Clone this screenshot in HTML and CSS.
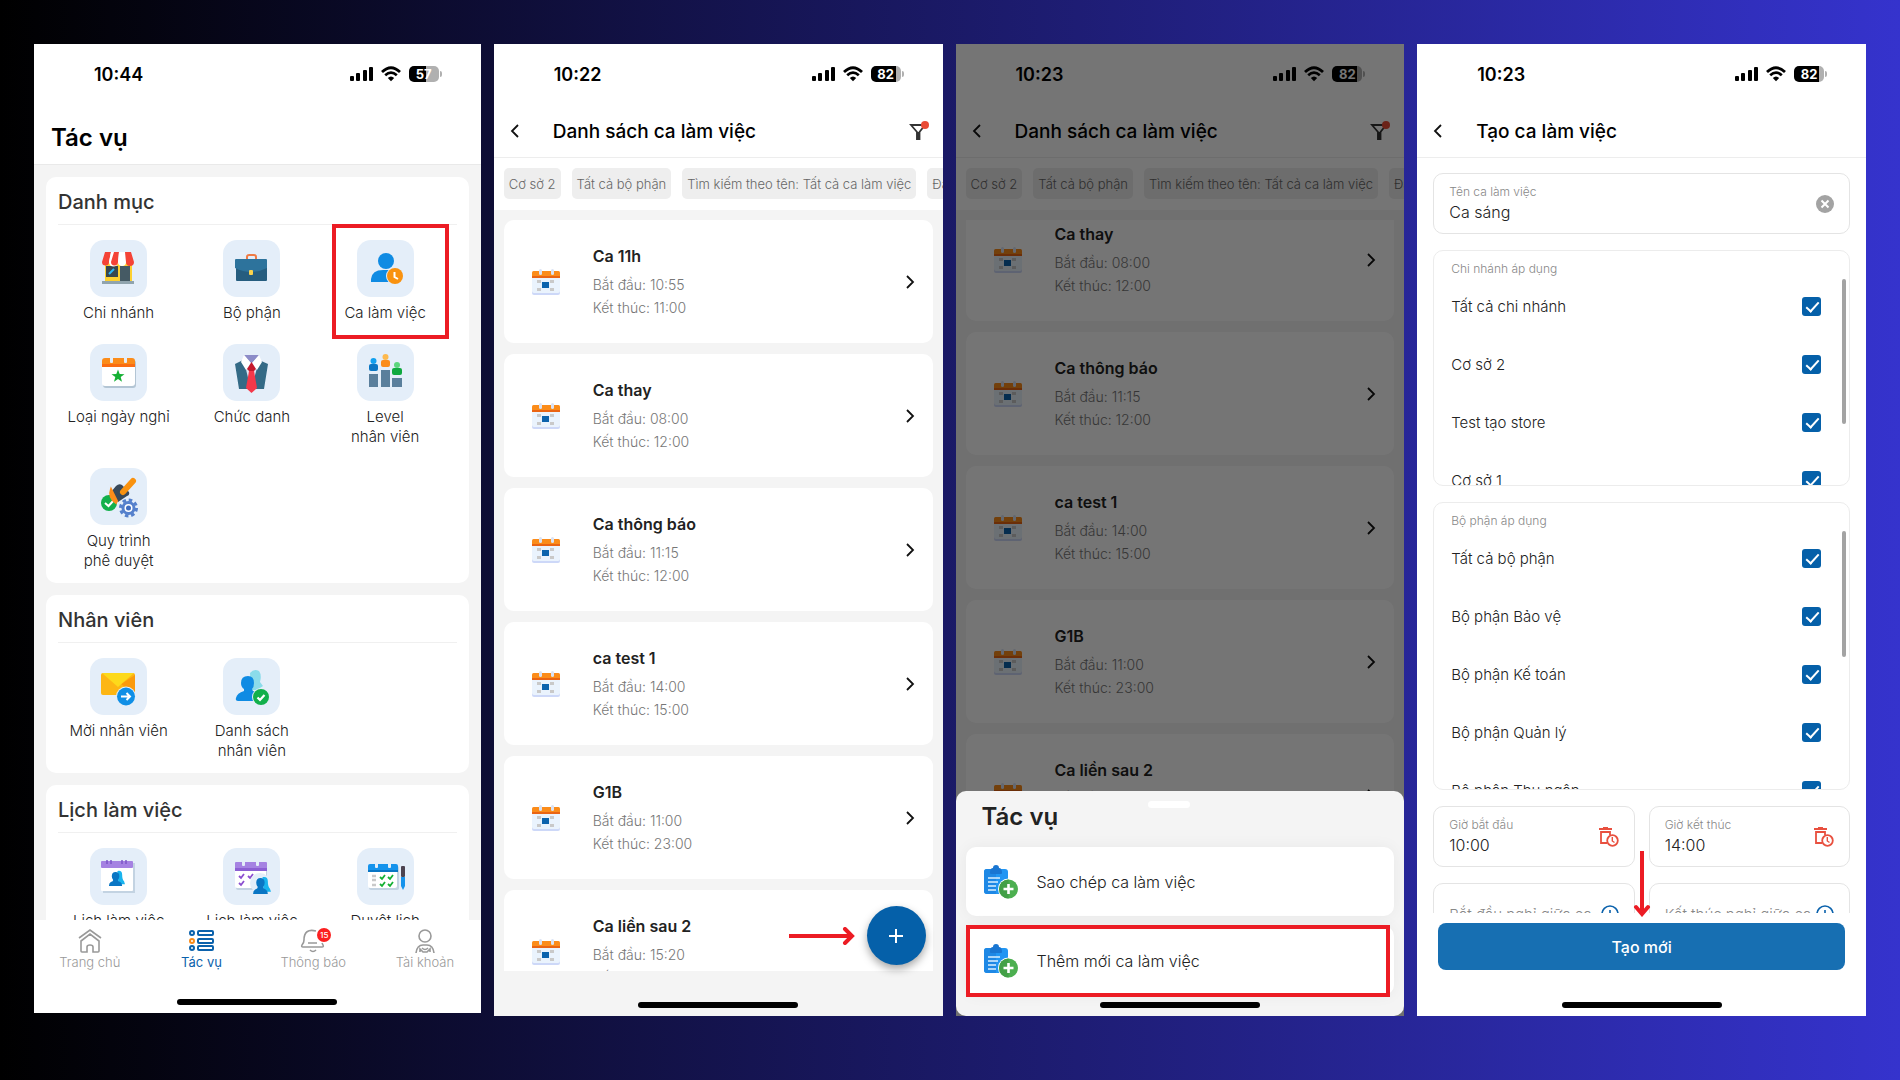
FILE: index.html
```html
<!DOCTYPE html>
<html lang="vi">
<head>
    <meta charset="UTF-8">
    <meta name="viewport" content="width=device-width, initial-scale=1.0">
    <title>Tạo ca làm việc</title>
    <link rel="stylesheet" href="styles.css">
</head>
<body>
    <!-- Biểu tượng dùng chung -->
    <svg class="sprite" width="0" height="0" aria-hidden="true">
        <symbol id="signal" viewBox="0 0 24 16">
            <rect x="0" y="10" width="4" height="5" rx="1"/>
            <rect x="6" y="7" width="4" height="8" rx="1"/>
            <rect x="13" y="4" width="4" height="11" rx="1"/>
            <rect x="19" y="1" width="4" height="14" rx="1"/>
        </symbol>
        <symbol id="wifi" viewBox="0 0 20 16">
            <path d="M1 6 Q10 -2.500 19 6" fill="none" stroke="#000" stroke-width="2.800"/>
            <path d="M4.200 9.200 Q10 4 15.800 9.200" fill="none" stroke="#000" stroke-width="2.700"/>
            <path d="M6.800 12 Q10 9 13.200 12 L10 15.200 Z"/>
        </symbol>
        <symbol id="back" viewBox="0 0 10 14">
            <path d="M8 1 L2 7 L8 13" fill="none" stroke="#111" stroke-width="1.800"/>
        </symbol>
        <symbol id="next" viewBox="0 0 10 14">
            <path d="M2 1 L8 7 L2 13" fill="none" stroke="#111" stroke-width="1.800"/>
        </symbol>
        <symbol id="filter" viewBox="0 0 22 22">
            <path d="M2 5 H16 L10.500 12 V19 H8 V12 Z" fill="none" stroke="#333" stroke-width="1.800"/>
            <path d="M7.500 12 H11 V20 H7.500 Z" fill="#333"/>
            <circle cx="16" cy="5" r="4" fill="#e94b35"/>
        </symbol>
        <symbol id="calendar" viewBox="0 0 28 26">
            <rect x="0" y="3" width="28" height="23" rx="2" fill="#cdd8f8"/>
            <rect x="0" y="3" width="28" height="21" rx="2" fill="#eaf3fd"/>
            <path d="M0 9 V3.500 Q0 2 1.500 2 H26.500 Q28 2 28 3.500 V9 Z" fill="#fb8c1a"/>
            <path d="M0 7 H28 V9 H0 Z" fill="#ea6413"/>
            <rect x="7" y="0" width="3" height="6" rx="1.500" fill="#d9e2f3"/>
            <rect x="19" y="0" width="3" height="6" rx="1.500" fill="#d9e2f3"/>
            <rect x="5" y="11" width="4" height="3" fill="#c9c9c9"/>
            <rect x="18" y="11" width="4" height="3" fill="#c9c9c9"/>
            <rect x="5" y="19" width="4" height="3" fill="#c9c9c9"/>
            <rect x="18" y="19" width="4" height="3" fill="#c9c9c9"/>
            <rect x="10" y="13" width="7" height="6" fill="#0c63ad"/>
        </symbol>
        <symbol id="clipboard" viewBox="0 0 34 34">
            <rect x="0" y="4" width="24" height="25" rx="3" fill="#2196f3"/>
            <path d="M0 7 Q0 4 3 4 H12 V29 H3 Q0 29 0 26 Z" fill="#1e88e5"/>
            <path d="M6 8 Q6 3 9 3 Q9 0 12 0 Q15 0 15 3 Q18 3 18 8 Q18 9 17 9 H7 Q6 9 6 8 Z" fill="#1976d2"/>
            <path d="M4 13 H16 M4 17 H14 M4 21 H12 M4 25 H12" stroke="#d9efff" stroke-width="1.600"/>
            <circle cx="24.500" cy="24" r="10.500" fill="#fff"/>
            <circle cx="24.500" cy="24" r="9.500" fill="#4caf50"/>
            <path d="M24.500 14.500 A9.500 9.500 0 0 0 24.500 33.500 Z" fill="#43a047"/>
            <path d="M24.500 19 V29 M19.500 24 H29.500" stroke="#fff" stroke-width="2.600"/>
        </symbol>
        <symbol id="trash-clock" viewBox="0 0 20 20">
            <path d="M0 2 H13 M4 1 H9" fill="none" stroke="#e8503f" stroke-width="1.800"/>
            <path d="M8 16 H2 V5 H11 V8" fill="none" stroke="#e8503f" stroke-width="1.800"/>
            <circle cx="13.500" cy="13.500" r="5.300" fill="#fff" stroke="#e8503f" stroke-width="1.800"/>
            <path d="M13.300 10 V14 L15.500 15.500" fill="none" stroke="#e8503f" stroke-width="1.400"/>
        </symbol>
        <symbol id="info" viewBox="0 0 18 18">
            <circle cx="9" cy="9" r="8" fill="none" stroke="#0b62ac" stroke-width="1.600"/>
            <path d="M9 5 V9 L12 11" fill="none" stroke="#0b62ac" stroke-width="1.600"/>
        </symbol>
        <symbol id="people" viewBox="0 0 18 18">
            <path d="M10 1 Q15 0 15 5 Q15 10 17 12 L18 15 H11 Z" fill="#19b4ee"/>
            <path d="M8 2 Q12 2 12 6.500 Q12 9 10.500 10.500 Q10.500 12 13 12.800 Q15 14 15 17 H1 Q1 14 3 12.800 Q5.500 12 5.500 10.500 Q4 9 4 6.500 Q4 2 8 2 Z" fill="#0a76c4"/>
        </symbol>
    </svg>

    <main class="screens">

        <!-- Màn hình 1: Tác vụ -->
        <section class="phone phone-tasks">
            <div class="status">
                <span class="time">10:44</span>
                <svg class="signal"><use href="#signal"/></svg>
                <svg class="wifi"><use href="#wifi"/></svg>
                <span class="battery battery-half">57</span>
            </div>
            <header class="big-header"><h1>Tác vụ</h1></header>
            <div class="groups">
                <div class="group">
                    <h2>Danh mục</h2>
                    <div class="tiles">
                        <a class="tile" href="#">
                            <svg viewBox="0 0 57 57">
                                <rect x="15" y="22" width="27" height="20" fill="#fdd02f"/>
                                <rect x="16" y="26" width="12" height="11" fill="#37474f"/>
                                <path d="M19 34 L24 29" stroke="#29b6f6" stroke-width="2"/>
                                <rect x="30" y="26" width="10" height="16" fill="#455a64"/>
                                <rect x="12" y="41" width="32" height="3" fill="#90a4ae"/>
                                <path d="M15 12 H21 L19 22 A3.500 3.500 0 0 1 12 22 Z" fill="#f44336"/>
                                <path d="M21 12 H28 V22 A3.500 3.500 0 0 1 19 22 Z" fill="#fff"/>
                                <path d="M24 12 H29 L28 22 A3.500 3.500 0 0 1 21 22 Z" fill="#f44336"/>
                                <path d="M29 12 H35 L36 22 A3.500 3.500 0 0 1 28 22 Z" fill="#fff"/>
                                <path d="M35 12 H41 L44 22 A3.500 3.500 0 0 1 36 22 Z" fill="#f44336"/>
                            </svg>
                            <span>Chi nhánh</span>
                        </a>
                        <a class="tile" href="#">
                            <svg viewBox="0 0 57 57">
                                <path d="M24 19 V17 Q24 15 26 15 H31 Q33 15 33 17 V19" fill="none" stroke="#ef7b45" stroke-width="2"/>
                                <rect x="13" y="24" width="31" height="17" rx="1" fill="#265d7f"/>
                                <path d="M12 20 Q12 19 13 19 H43 Q44 19 44 20 V28 Q36 32 28 32 Q20 32 12 28 Z" fill="#2d739c"/>
                                <rect x="26" y="30" width="4" height="5" rx="1" fill="#fbd34c"/>
                            </svg>
                            <span>Bộ phận</span>
                        </a>
                        <a class="tile marked" href="#">
                            <svg viewBox="0 0 57 57">
                                <circle cx="29" cy="21" r="8" fill="#0f8be3"/>
                                <path d="M14 42 V39 Q15 30 26 30 H35 V42 Z" fill="#0f8be3"/>
                                <circle cx="38" cy="36" r="9" fill="#e4eef9"/>
                                <circle cx="38" cy="36" r="8" fill="#f9920f"/>
                                <path d="M37.500 32 V37 L41 39" fill="none" stroke="#fff" stroke-width="2"/>
                            </svg>
                            <span>Ca làm việc</span>
                        </a>
                        <a class="tile" href="#">
                            <svg viewBox="0 0 57 57">
                                <rect x="13" y="16" width="33" height="28" rx="3" fill="#b3c5d4"/>
                                <rect x="12" y="15" width="33" height="27" rx="3" fill="#fff"/>
                                <path d="M12 23 V17 Q12 14 15 14 H42 Q45 14 45 17 V23 Z" fill="#fb8c1a"/>
                                <path d="M12 20 H45 V23 H12 Z" fill="#fa6d12"/>
                                <rect x="20" y="12" width="3" height="7" rx="1" fill="#e4eef9"/>
                                <rect x="34" y="12" width="3" height="7" rx="1" fill="#e4eef9"/>
                                <path d="M28 25.500 L29.700 30 L34.500 30.200 L30.700 33.100 L32 37.800 L28 35.100 L24 37.800 L25.300 33.100 L21.500 30.200 L26.300 30 Z" fill="#15b034"/>
                            </svg>
                            <span>Loại ngày nghỉ</span>
                        </a>
                        <a class="tile" href="#">
                            <svg viewBox="0 0 57 57">
                                <path d="M12 20 L20 16 L28 34 L36 16 L45 20 L41 45 H16 Z" fill="#346a86"/>
                                <path d="M21 17 H36 L29 42 H27 Z" fill="#dfe6f4"/>
                                <path d="M21 11 H36 L28.500 20 Z" fill="#8c8cc8"/>
                                <path d="M21 11 L28 19 L23 26 L18 18 Z M36 11 L29 19 L34 26 L39 18 Z" fill="#fff"/>
                                <path d="M28.500 18 L33 25 L31 27 H26 L24 25 Z" fill="#c5192d"/>
                                <path d="M26 27 H31 L34 44 L28.500 49 L23 44 Z" fill="#f4384a"/>
                            </svg>
                            <span>Chức danh</span>
                        </a>
                        <a class="tile" href="#">
                            <svg viewBox="0 0 57 57">
                                <rect x="12" y="30" width="9" height="13" fill="#5a7f9c"/>
                                <rect x="24" y="26" width="9" height="17" fill="#5a7f9c"/>
                                <rect x="35" y="34" width="10" height="9" fill="#5a7f9c"/>
                                <rect x="12" y="20" width="9" height="7" rx="2" fill="#0a76c4"/>
                                <circle cx="16.500" cy="17" r="3" fill="#12a0ef"/>
                                <rect x="24" y="16" width="9" height="7" rx="2" fill="#fb8c1a"/>
                                <circle cx="28.500" cy="13" r="3" fill="#fdb94e"/>
                                <rect x="35" y="24" width="10" height="7" rx="2" fill="#0fa93f"/>
                                <circle cx="40" cy="21" r="3" fill="#5cd67d"/>
                            </svg>
                            <span>Level<br>nhân viên</span>
                        </a>
                        <a class="tile" href="#">
                            <svg viewBox="0 0 57 57">
                                <circle cx="19" cy="35" r="8" fill="#12b04b"/>
                                <path d="M15 35 L18.500 38 L24 32" fill="none" stroke="#fff" stroke-width="2"/>
                                <path d="M21 24 L26 18 Q29 15 32 17 L39 24 Q40 27 37 28 L28 34 Z" fill="#38495a"/>
                                <path d="M21 21 L27 33 L26 35 Q18 29 21 21 Z" fill="#fb8c1a" stroke="#fb8c1a" stroke-width="2"/>
                                <path d="M33 24 L43 13" stroke="#f9920f" stroke-width="6" stroke-linecap="round"/>
                                <circle cx="38.500" cy="40" r="8" fill="none" stroke="#5580cc" stroke-width="3" stroke-dasharray="3.500 2.780"/>
                                <circle cx="38.500" cy="40" r="5.500" fill="#fff" stroke="#5580cc" stroke-width="3"/>
                                <circle cx="38.500" cy="40" r="2.500" fill="#3f6cc0"/>
                            </svg>
                            <span>Quy trình<br>phê duyệt</span>
                        </a>
                    </div>
                </div>
                <div class="group">
                    <h2>Nhân viên</h2>
                    <div class="tiles">
                        <a class="tile" href="#">
                            <svg viewBox="0 0 57 57">
                                <rect x="11" y="15" width="34" height="22" rx="2" fill="#fdb614"/>
                                <path d="M45 17 V36 L31 26 Z" fill="#fb9a0c"/>
                                <path d="M12 15 H44 L28 29 Z" fill="#fdd91b"/>
                                <circle cx="36" cy="38.500" r="10" fill="#e4eef9"/>
                                <circle cx="36" cy="38.500" r="9" fill="#108fe6"/>
                                <path d="M31 38.500 H40 M36.500 35 L40 38.500 L36.500 42" fill="none" stroke="#fff" stroke-width="2"/>
                            </svg>
                            <span>Mời nhân viên</span>
                        </a>
                        <a class="tile" href="#">
                            <svg viewBox="0 0 57 57">
                                <path d="M27 15 Q31 10 36 13 Q39 17 37 24 L40 28 L34 32 H28 Z" fill="#8bdcea"/>
                                <path d="M25 18 Q31 18 31 25 Q31 29 29 31 Q29 33 32 34 L36 43 H15 Q12 43 13 40 Q14 35 21 33 Q21 32 21 31 Q18 29 18 25 Q18 18 25 18 Z" fill="#0f8be3"/>
                                <circle cx="38" cy="39" r="9" fill="#e4eef9"/>
                                <circle cx="38" cy="39" r="8" fill="#12b04b"/>
                                <path d="M34.500 39.500 L37 42 L41.500 37" fill="none" stroke="#fff" stroke-width="2.200"/>
                            </svg>
                            <span>Danh sách<br>nhân viên</span>
                        </a>
                    </div>
                </div>
                <div class="group">
                    <h2>Lịch làm việc</h2>
                    <div class="tiles">
                        <a class="tile" href="#">
                            <svg viewBox="0 0 57 57">
                                <rect x="13" y="15" width="32" height="30" fill="#c3d3e2"/>
                                <rect x="11" y="14" width="32" height="29" rx="1" fill="#fff"/>
                                <rect x="11" y="13" width="32" height="7" rx="1" fill="#a582e2"/>
                                <path d="M17 16 V12 M21 16 V12 M32 16 V12 M36 16 V12" stroke="#7d55c7" stroke-width="1.500"/>
                                <use href="#people" x="18" y="22" width="17" height="17"/>
                            </svg>
                            <span>Lịch làm việc</span>
                        </a>
                        <a class="tile" href="#">
                            <svg viewBox="0 0 57 57">
                                <rect x="13" y="16" width="31" height="26" rx="2" fill="#c3d3e2"/>
                                <rect x="12" y="15" width="31" height="25" rx="2" fill="#fff"/>
                                <path d="M12 22 V15 Q12 14 13 14 H43 Q44 14 44 15 V22 Z" fill="#a582e2"/>
                                <path d="M12 20 H44 V23 H12 Z" fill="#8c5fd3"/>
                                <rect x="19" y="12" width="3" height="6" rx="1" fill="#e4eef9"/>
                                <rect x="33" y="12" width="3" height="6" rx="1" fill="#e4eef9"/>
                                <path d="M16 28 L18 30 L21 26 M25 28 L27 30 L30 26 M16 35 L18 37 L21 33" fill="none" stroke="#8c4fd0" stroke-width="1.800"/>
                                <circle cx="37" cy="35" r="10" fill="#e4eef9"/>
                                <use href="#people" x="29" y="28" width="19" height="19"/>
                            </svg>
                            <span>Lịch làm việc</span>
                        </a>
                        <a class="tile" href="#">
                            <svg viewBox="0 0 57 57">
                                <rect x="12" y="18" width="30" height="24" rx="2" fill="#c3d3e2"/>
                                <rect x="11" y="17" width="29" height="23" rx="2" fill="#fff"/>
                                <path d="M11 24 V18 Q11 16 13 16 H39 Q41 16 41 18 V24 Z" fill="#1593ec"/>
                                <path d="M11 22 H41 V24 H11 Z" fill="#0a76c4"/>
                                <rect x="18" y="15" width="3" height="5" rx="1" fill="#e4eef9"/>
                                <rect x="31" y="15" width="3" height="5" rx="1" fill="#e4eef9"/>
                                <path d="M15 28 H19 M15 32 H19 M15 37 H19" stroke="#c9c9c9" stroke-width="2.500"/>
                                <path d="M23 29 L25 31 L28 27 M31 29 L33 31 L36 27 M23 36 L25 38 L28 34 M31 36 L33 38 L36 34" fill="none" stroke="#15b034" stroke-width="1.800"/>
                                <rect x="44" y="18" width="4" height="11" rx="1" fill="#4c4350"/>
                                <path d="M44 29 H48 V38 L46 42 L44 38 Z" fill="#1593ec"/>
                            </svg>
                            <span>Duyệt lịch</span>
                        </a>
                    </div>
                </div>
            </div>
            <nav class="tabs">
                <a href="#">
                    <svg viewBox="0 0 26 26" fill="none" stroke="#999" stroke-width="1.600">
                        <path d="M2 10 L13 2 L24 10"/>
                        <path d="M4 13 L13 6 L22 13 V23 Q22 24 21 24 H16 V19 Q16 17 13 17 Q10 17 10 19 V24 H5 Q4 24 4 23 Z"/>
                    </svg>
                    <span>Trang chủ</span>
                </a>
                <a class="active" href="#">
                    <svg viewBox="0 0 26 26" fill="none" stroke="#0b62ac" stroke-width="2">
                        <circle cx="3" cy="5" r="2"/>
                        <circle cx="3" cy="13" r="2" stroke="#fb8c1a"/>
                        <circle cx="3" cy="20" r="2"/>
                        <rect x="9" y="3" width="15" height="4" rx="1"/>
                        <rect x="9" y="11" width="15" height="4" rx="1"/>
                        <rect x="9" y="18" width="15" height="4" rx="1"/>
                    </svg>
                    <span>Tác vụ</span>
                </a>
                <a href="#">
                    <svg viewBox="0 0 26 26" fill="none" stroke="#999" stroke-width="1.600">
                        <path d="M16 3 Q4 0 4 12 Q4 15 2 17 Q1 19 3 19 H22 Q24 19 23 17 L22 15"/>
                        <path d="M8 15 H17 M10 22 Q13 25 16 22"/>
                    </svg>
                    <b class="count">15</b>
                    <span>Thông báo</span>
                </a>
                <a href="#">
                    <svg viewBox="0 0 26 26" fill="none" stroke="#999" stroke-width="1.600">
                        <circle cx="13" cy="8" r="6"/>
                        <path d="M4 25 Q5 17 11 17 H15 Q21 17 22 25"/>
                        <path d="M8 24 V21 L11 24 H15 L18 21 V24 M10 20 Q13 23 16 20"/>
                    </svg>
                    <span>Tài khoản</span>
                </a>
            </nav>
            <div class="home-bar"></div>
        </section>

        <!-- Màn hình 2: Danh sách ca -->
        <section class="phone phone-list">
            <div class="status">
                <span class="time">10:22</span>
                <svg class="signal"><use href="#signal"/></svg>
                <svg class="wifi"><use href="#wifi"/></svg>
                <span class="battery">82</span>
            </div>
            <header class="header">
                <button class="back" type="button" aria-label="Quay lại"><svg><use href="#back"/></svg></button>
                <h1>Danh sách ca làm việc</h1>
                <button class="filter" type="button" aria-label="Bộ lọc"><svg><use href="#filter"/></svg></button>
            </header>
            <div class="chips">
                <button type="button">Cơ sở 2</button>
                <button type="button">Tất cả bộ phận</button>
                <button type="button">Tìm kiếm theo tên: Tất cả ca làm việc</button>
                <button type="button">Đang hoạt động</button>
            </div>
            <div class="shifts">
                <a class="shift" href="#">
                    <svg class="cal"><use href="#calendar"/></svg>
                    <div><h3>Ca 11h</h3><p>Bắt đầu: 10:55</p><p>Kết thúc: 11:00</p></div>
                    <svg class="next"><use href="#next"/></svg>
                </a>
                <a class="shift" href="#">
                    <svg class="cal"><use href="#calendar"/></svg>
                    <div><h3>Ca thay</h3><p>Bắt đầu: 08:00</p><p>Kết thúc: 12:00</p></div>
                    <svg class="next"><use href="#next"/></svg>
                </a>
                <a class="shift" href="#">
                    <svg class="cal"><use href="#calendar"/></svg>
                    <div><h3>Ca thông báo</h3><p>Bắt đầu: 11:15</p><p>Kết thúc: 12:00</p></div>
                    <svg class="next"><use href="#next"/></svg>
                </a>
                <a class="shift" href="#">
                    <svg class="cal"><use href="#calendar"/></svg>
                    <div><h3>ca test 1</h3><p>Bắt đầu: 14:00</p><p>Kết thúc: 15:00</p></div>
                    <svg class="next"><use href="#next"/></svg>
                </a>
                <a class="shift" href="#">
                    <svg class="cal"><use href="#calendar"/></svg>
                    <div><h3>G1B</h3><p>Bắt đầu: 11:00</p><p>Kết thúc: 23:00</p></div>
                    <svg class="next"><use href="#next"/></svg>
                </a>
                <a class="shift" href="#">
                    <svg class="cal"><use href="#calendar"/></svg>
                    <div><h3>Ca liền sau 2</h3><p>Bắt đầu: 15:20</p><p>Kết thúc: 17:00</p></div>
                </a>
            </div>
            <div class="fab-wrap">
                <svg class="arrow-right" viewBox="0 0 66 18" fill="none" stroke="#ec1c24" stroke-width="4">
                    <path d="M0 9 H62"/>
                    <path d="M56 2 L63 9 L56 16" stroke-linecap="round"/>
                </svg>
                <button class="fab" type="button" aria-label="Thêm">
                    <svg viewBox="0 0 16 16"><path d="M8 1 V15 M1 8 H15" stroke="#fff" stroke-width="2"/></svg>
                </button>
            </div>
            <div class="home-bar"></div>
        </section>

        <!-- Màn hình 3: Menu tác vụ -->
        <section class="phone phone-list phone-sheet">
            <div class="status">
                <span class="time">10:23</span>
                <svg class="signal"><use href="#signal"/></svg>
                <svg class="wifi"><use href="#wifi"/></svg>
                <span class="battery">82</span>
            </div>
            <header class="header">
                <button class="back" type="button" aria-label="Quay lại"><svg><use href="#back"/></svg></button>
                <h1>Danh sách ca làm việc</h1>
                <button class="filter" type="button" aria-label="Bộ lọc"><svg><use href="#filter"/></svg></button>
            </header>
            <div class="chips">
                <button type="button">Cơ sở 2</button>
                <button type="button">Tất cả bộ phận</button>
                <button type="button">Tìm kiếm theo tên: Tất cả ca làm việc</button>
                <button type="button">Đang hoạt động</button>
            </div>
            <div class="shifts scrolled">
                <a class="shift" href="#">
                    <svg class="cal"><use href="#calendar"/></svg>
                    <div><h3>Ca thay</h3><p>Bắt đầu: 08:00</p><p>Kết thúc: 12:00</p></div>
                    <svg class="next"><use href="#next"/></svg>
                </a>
                <a class="shift" href="#">
                    <svg class="cal"><use href="#calendar"/></svg>
                    <div><h3>Ca thông báo</h3><p>Bắt đầu: 11:15</p><p>Kết thúc: 12:00</p></div>
                    <svg class="next"><use href="#next"/></svg>
                </a>
                <a class="shift" href="#">
                    <svg class="cal"><use href="#calendar"/></svg>
                    <div><h3>ca test 1</h3><p>Bắt đầu: 14:00</p><p>Kết thúc: 15:00</p></div>
                    <svg class="next"><use href="#next"/></svg>
                </a>
                <a class="shift" href="#">
                    <svg class="cal"><use href="#calendar"/></svg>
                    <div><h3>G1B</h3><p>Bắt đầu: 11:00</p><p>Kết thúc: 23:00</p></div>
                    <svg class="next"><use href="#next"/></svg>
                </a>
                <a class="shift" href="#">
                    <svg class="cal"><use href="#calendar"/></svg>
                    <div><h3>Ca liền sau 2</h3><p>Bắt đầu: 15:20</p><p>Kết thúc: 17:00</p></div>
                    <svg class="next"><use href="#next"/></svg>
                </a>
            </div>
            <div class="overlay">
                <div class="sheet">
                    <i class="handle"></i>
                    <h2>Tác vụ</h2>
                    <button type="button"><svg><use href="#clipboard"/></svg>Sao chép ca làm việc</button>
                    <button class="marked" type="button"><svg><use href="#clipboard"/></svg>Thêm mới ca làm việc</button>
                </div>
            </div>
            <div class="home-bar"></div>
        </section>

        <!-- Màn hình 4: Tạo ca -->
        <section class="phone phone-form">
            <div class="status">
                <span class="time">10:23</span>
                <svg class="signal"><use href="#signal"/></svg>
                <svg class="wifi"><use href="#wifi"/></svg>
                <span class="battery">82</span>
            </div>
            <header class="header">
                <button class="back" type="button" aria-label="Quay lại"><svg><use href="#back"/></svg></button>
                <h1>Tạo ca làm việc</h1>
            </header>
            <form class="form">
                <div class="field">
                    <div class="field-text">
                        <label for="name">Tên ca làm việc</label>
                        <input id="name" type="text" value="Ca sáng">
                    </div>
                    <button type="button" aria-label="Xóa">
                        <svg class="icon-18" viewBox="0 0 18 18">
                            <circle cx="9" cy="9" r="9" fill="#a3a3a3"/>
                            <path d="M5.500 5.500 L12.500 12.500 M12.500 5.500 L5.500 12.500" stroke="#fff" stroke-width="2"/>
                        </svg>
                    </button>
                </div>
                <fieldset class="checks branches">
                    <legend>Chi nhánh áp dụng</legend>
                    <label>Tất cả chi nhánh<input type="checkbox" checked></label>
                    <label>Cơ sở 2<input type="checkbox" checked></label>
                    <label>Test tạo store<input type="checkbox" checked></label>
                    <label>Cơ sở 1<input type="checkbox" checked></label>
                    <i class="thumb"></i>
                </fieldset>
                <fieldset class="checks departments">
                    <legend>Bộ phận áp dụng</legend>
                    <label>Tất cả bộ phận<input type="checkbox" checked></label>
                    <label>Bộ phận Bảo vệ<input type="checkbox" checked></label>
                    <label>Bộ phận Kế toán<input type="checkbox" checked></label>
                    <label>Bộ phận Quản lý<input type="checkbox" checked></label>
                    <label>Bộ phận Thu ngân<input type="checkbox" checked></label>
                    <i class="thumb"></i>
                </fieldset>
                <div class="pair">
                    <div class="field">
                        <div class="field-text">
                            <label for="start">Giờ bắt đầu</label>
                            <input id="start" type="text" value="10:00">
                        </div>
                        <button type="button" aria-label="Xóa giờ"><svg class="icon-20"><use href="#trash-clock"/></svg></button>
                    </div>
                    <div class="field">
                        <div class="field-text">
                            <label for="end">Giờ kết thúc</label>
                            <input id="end" type="text" value="14:00">
                        </div>
                        <button type="button" aria-label="Xóa giờ"><svg class="icon-20"><use href="#trash-clock"/></svg></button>
                    </div>
                </div>
                <div class="pair">
                    <div class="field">
                        <div class="field-text">
                            <input type="text" aria-label="Bắt đầu nghỉ giữa ca" placeholder="Bắt đầu nghỉ giữa ca">
                        </div>
                        <button type="button" aria-label="Chọn giờ"><svg class="icon-18"><use href="#info"/></svg></button>
                    </div>
                    <div class="field">
                        <div class="field-text">
                            <input type="text" aria-label="Kết thúc nghỉ giữa ca" placeholder="Kết thúc nghỉ giữa ca">
                        </div>
                        <button type="button" aria-label="Chọn giờ"><svg class="icon-18"><use href="#info"/></svg></button>
                    </div>
                </div>
            </form>
            <div class="submit-bar">
                <svg class="arrow-down" viewBox="0 0 18 66" fill="none" stroke="#ec1c24" stroke-width="4">
                    <path d="M9 0 V62"/>
                    <path d="M3 56 L9 63 L15 56" stroke-linecap="round"/>
                </svg>
                <button class="submit" type="button">Tạo mới</button>
            </div>
            <div class="home-bar"></div>
        </section>

    </main>
</body>
</html>
```

FILE: styles.css
```css
* {
    box-sizing: border-box;
}
body {
    margin: 0;
    font-family: Inter, "Noto Sans", sans-serif;
    color: #222;
    background: linear-gradient(90deg, #000, #3533cd);
}
h1, h2, h3, p {
    margin: 0;
}
a {
    color: inherit;
    text-decoration: none;
}
button {
    font: inherit;
    color: inherit;
    background: none;
    border: 0;
    padding: 0;
    margin: 0;
}
svg {
    display: block;
    flex: none;
}
.sprite {
    position: absolute;
}
.screens {
    display: grid;
    grid-template-columns: 447fr 449fr 449fr 449fr;
    gap: 13px;
    height: 100vh;
    min-height: 800px;
    padding: 44px 34px 64px;
}
.phone {
    position: relative;
    min-width: 0;
    min-height: 0;
    display: flex;
    flex-direction: column;
    overflow: hidden;
    background: #fff;
}
.phone-tasks {
    margin-bottom: 3px;
}
.phone-list {
    background: #f4f4f4;
}

/* status bar */
.status {
    display: flex;
    align-items: center;
    height: 60px;
    padding: 0 42px 0 60px;
    background: #fff;
}
.time {
    flex: 1;
    font-size: 18px;
    font-weight: 600;
    color: #000;
}
.signal {
    width: 24px;
    height: 16px;
    margin-right: 7px;
}
.wifi {
    width: 20px;
    height: 16px;
    margin-right: 8px;
}
.battery {
    position: relative;
    width: 30px;
    height: 16px;
    border-radius: 5px;
    background: linear-gradient(90deg, #000 82%, #b0b0b0 82%);
    color: #fff;
    font-size: 13px;
    font-weight: 700;
    line-height: 16px;
    text-align: center;
}
.battery-half {
    background: linear-gradient(90deg, #000 57%, #b0b0b0 57%);
}
.battery::after {
    content: "";
    position: absolute;
    left: 31px;
    top: 5px;
    width: 2px;
    height: 6px;
    border-radius: 0 2px 2px 0;
    background: #b0b0b0;
}
.home-bar {
    position: absolute;
    left: 50%;
    bottom: 8px;
    width: 160px;
    height: 6px;
    margin-left: -80px;
    border-radius: 3px;
    background: #000;
}

/* tasks */
.big-header {
    height: 61px;
    padding: 18px 17px 0;
    border-bottom: 1px solid #e9e9e9;
}
.big-header h1 {
    font-size: 24px;
    line-height: 32px;
    font-weight: 600;
    color: #000;
}
.groups {
    flex: 1;
    min-height: 0;
    overflow: hidden;
    padding: 12px;
    background: #f4f4f4;
}
.group {
    margin-bottom: 12px;
    padding-bottom: 12px;
    border-radius: 10px;
    background: #fff;
}
.group h2 {
    height: 48px;
    margin: 0 12px 15px;
    padding-top: 12px;
    border-bottom: 1px solid #f0f0f0;
    font-size: 20px;
    line-height: 26px;
    font-weight: 500;
    color: #333;
}
.tiles {
    display: grid;
    grid-template-columns: repeat(3, 1fr);
    row-gap: 21px;
    margin: 0 17px 0 6px;
}
.tile {
    position: relative;
    display: flex;
    flex-direction: column;
    align-items: center;
    gap: 6px;
    font-size: 15px;
    line-height: 20px;
    font-weight: 300;
    text-align: center;
}
.tile svg {
    width: 57px;
    height: 57px;
    border-radius: 14px;
    background: #e4eef9;
}
.tile.marked::after {
    content: "";
    position: absolute;
    inset: -16px 3px -16px 13px;
    border: 4px solid #ec1c24;
}
.tabs {
    display: grid;
    grid-template-columns: repeat(4, 1fr);
    height: 93px;
    padding-top: 8px;
    background: #fff;
    color: #999;
    font-size: 13px;
    line-height: 16px;
    font-weight: 300;
    text-align: center;
}
.tabs a {
    position: relative;
    display: flex;
    flex-direction: column;
    align-items: center;
}
.tabs svg {
    width: 26px;
    height: 26px;
}
.tabs .active {
    color: #0b62ac;
    font-weight: 400;
}
.count {
    position: absolute;
    left: 50%;
    top: 0;
    width: 14px;
    height: 14px;
    margin-left: 4px;
    border-radius: 50%;
    background: #fb2020;
    color: #fff;
    font-size: 8px;
    line-height: 14px;
    font-weight: 500;
}

/* shift list */
.header {
    display: flex;
    align-items: center;
    height: 54px;
    padding: 0 12px 0 16px;
    border-bottom: 1px solid #ededed;
    background: #fff;
}
.header h1 {
    flex: 1;
    padding-top: 2px;
    font-size: 19px;
    line-height: 26px;
    font-weight: 500;
    color: #000;
}
.back {
    width: 43px;
}
.back svg {
    width: 10px;
    height: 14px;
}
.filter svg {
    width: 22px;
    height: 22px;
}
.chips {
    display: flex;
    gap: 11px;
    flex: none;
    overflow: hidden;
    padding: 10px 10px 11px;
    background: #fff;
}
.chips button {
    flex: none;
    height: 31px;
    padding: 0 5px;
    border-radius: 5px;
    background: #eee;
    color: #666;
    font-size: 13px;
    font-weight: 300;
}
.shifts {
    flex: 1;
    min-height: 0;
    display: flex;
    flex-direction: column;
    gap: 11px;
    overflow: hidden;
    margin: 10px 10px 45px;
}
.shift {
    flex: none;
    display: flex;
    align-items: center;
    height: 123px;
    padding: 0 18px 0 28px;
    border-radius: 10px;
    background: #fff;
}
.scrolled .shift:first-child {
    margin-top: -22px;
}
.shift div {
    flex: 1;
    padding-left: 33px;
}
.shift h3 {
    margin-bottom: 5px;
    font-size: 16px;
    line-height: 24px;
    font-weight: 600;
}
.shift p {
    color: #777;
    font-size: 14px;
    line-height: 23px;
    font-weight: 300;
}
.cal {
    width: 28px;
    height: 26px;
}
.next {
    width: 10px;
    height: 14px;
}
.fab-wrap {
    position: absolute;
    right: 17px;
    bottom: 51px;
    display: flex;
    align-items: center;
    gap: 12px;
}
.arrow-right {
    width: 66px;
    height: 18px;
}
.fab {
    display: grid;
    place-items: center;
    width: 59px;
    height: 59px;
    border-radius: 50%;
    background: #0560a9;
    box-shadow: 0 4px 8px rgba(0, 0, 0, 0.35);
}
.fab svg {
    width: 16px;
    height: 16px;
}

/* bottom sheet */
.overlay {
    position: absolute;
    inset: 0;
    display: flex;
    align-items: flex-end;
    background: rgba(0, 0, 0, 0.54);
}
.sheet {
    position: relative;
    flex: 1;
    padding: 10px 10px 21px;
    border-radius: 10px;
    background: #f4f4f4;
}
.sheet h2 {
    padding: 0 16px;
    margin-bottom: 14px;
    font-size: 24px;
    line-height: 32px;
    font-weight: 600;
}
.handle {
    position: absolute;
    left: 50%;
    top: 10px;
    width: 42px;
    height: 7px;
    margin-left: -32px;
    border-radius: 4px;
    background: #fff;
}
.sheet button {
    position: relative;
    display: flex;
    align-items: center;
    gap: 19px;
    width: 100%;
    height: 69px;
    padding: 0 18px;
    border-radius: 10px;
    background: #fff;
    box-shadow: 0 0 16px rgba(0, 0, 0, 0.05);
    font-size: 16px;
    font-weight: 300;
}
.sheet button + button {
    margin-top: 10px;
}
.sheet svg {
    width: 34px;
    height: 34px;
}
.sheet .marked::after {
    content: "";
    position: absolute;
    inset: -1px 4px -2px 0;
    border: 4px solid #ec1c24;
}

/* form */
.form {
    flex: 1;
    min-height: 0;
    display: flex;
    flex-direction: column;
    gap: 16px;
    overflow: hidden;
    padding: 15px 16px 0;
}
.field {
    flex: 1;
    min-width: 0;
    display: flex;
    align-items: center;
    height: 61px;
    padding: 0 15px;
    border: 1px solid #e4e4e4;
    border-radius: 10px;
}
.form > .field {
    flex: none;
}
.field-text {
    flex: 1;
    min-width: 0;
}
.field label {
    display: block;
    color: #888;
    font-size: 12px;
    line-height: 16px;
    font-weight: 300;
}
.field input {
    display: block;
    width: 100%;
    height: 24px;
    padding: 0;
    border: 0;
    outline: 0;
    background: none;
    color: #222;
    font: 300 16px/24px Inter, "Noto Sans", sans-serif;
}
.field input::placeholder {
    color: #888;
    font-size: 15px;
}
.icon-18 {
    width: 18px;
    height: 18px;
}
.icon-20 {
    width: 20px;
    height: 20px;
}
.checks {
    position: relative;
    flex: none;
    min-width: 0;
    margin: 0;
    padding: 10px 28px 0 17px;
    border: 1px solid #ececec;
    border-radius: 10px;
    overflow: hidden;
}
.branches {
    height: 236px;
}
.departments {
    height: 288px;
}
.checks legend {
    float: left;
    width: 100%;
    padding: 0;
    color: #888;
    font-size: 12px;
    line-height: 16px;
    font-weight: 300;
}
.checks label {
    clear: both;
    display: flex;
    align-items: center;
    justify-content: space-between;
    height: 58px;
    font-size: 15px;
    font-weight: 300;
}
.checks input {
    appearance: none;
    position: relative;
    width: 19px;
    height: 19px;
    margin: 0;
    border-radius: 3px;
    background: #0560a9;
}
.checks input::after {
    content: "";
    position: absolute;
    left: 7px;
    top: 2px;
    width: 5px;
    height: 11px;
    border: solid #fff;
    border-width: 0 2px 2px 0;
    transform: rotate(42deg);
}
.thumb {
    position: absolute;
    right: 3px;
    top: 28px;
    width: 4px;
    height: 145px;
    border-radius: 2px;
    background: #a3a3a3;
}
.departments .thumb {
    height: 126px;
}
.pair {
    flex: none;
    display: flex;
    gap: 14px;
}
.arrow-down {
    position: absolute;
    left: 50%;
    top: -62px;
    width: 18px;
    height: 66px;
    margin-left: -9px;
}
.submit-bar {
    position: relative;
    height: 103px;
    padding: 10px 21px 0;
    background: #fff;
}
.submit {
    width: 100%;
    height: 47px;
    border-radius: 8px;
    background: #176fb2;
    color: #fff;
    font-size: 16px;
    font-weight: 500;
}
```
